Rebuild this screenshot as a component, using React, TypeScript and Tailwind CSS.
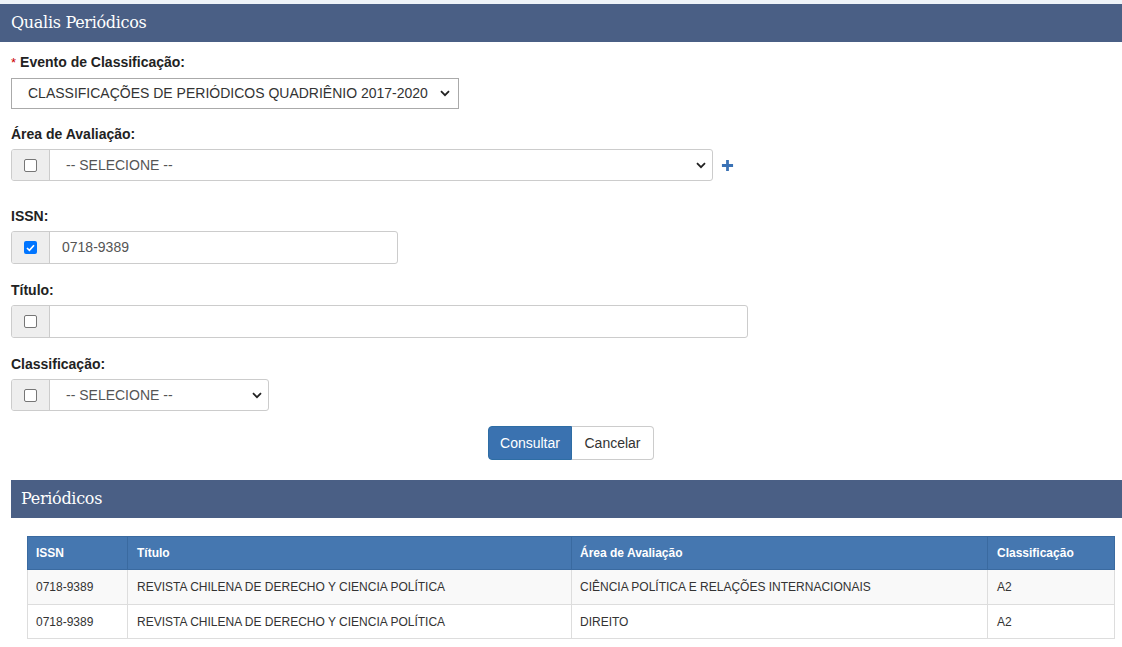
import React from 'react';

const font = { fontFamily: '"Liberation Sans", Arial, sans-serif' };
const slab = { fontFamily: '"DejaVu Serif", "Liberation Serif", serif', letterSpacing: '-0.3px' };

function Chevron() {
  return (
    <svg width="10" height="7" viewBox="0 0 10 7" className="shrink-0">
      <path d="M1 1.2 L5 5.2 L9 1.2" fill="none" stroke="#222" strokeWidth="1.8" />
    </svg>
  );
}

function Check({ checked }: { checked?: boolean }) {
  return (
    <div className="flex w-[38px] shrink-0 items-center justify-center border-r border-[#ccc] bg-[#eee]">
      {checked ? (
        <span className="flex h-[13px] w-[13px] items-center justify-center rounded-[2px] bg-[#0075ff]">
          <svg width="9" height="8" viewBox="0 0 9 8">
            <path d="M1 4 L3.4 6.3 L8 1.2" fill="none" stroke="#fff" strokeWidth="1.7" />
          </svg>
        </span>
      ) : (
        <span className="h-[13px] w-[13px] rounded-[2px] border border-[#767676] bg-white" />
      )}
    </div>
  );
}

function Label({ children, required }: { children: React.ReactNode; required?: boolean }) {
  return (
    <div className="mb-[7px] text-[14px] leading-[16px] font-bold text-[#222]">
      {required && <span className="mr-[4px] text-[13px] font-normal text-[#c00]">*</span>}
      {children}
    </div>
  );
}

const rows = [
  { issn: '0718-9389', titulo: 'REVISTA CHILENA DE DERECHO Y CIENCIA POLÍTICA', area: 'CIÊNCIA POLÍTICA E RELAÇÕES INTERNACIONAIS', cls: 'A2' },
  { issn: '0718-9389', titulo: 'REVISTA CHILENA DE DERECHO Y CIENCIA POLÍTICA', area: 'DIREITO', cls: 'A2' },
];

export default function App() {
  return (
    <div className="h-[647px] w-[1122px] overflow-hidden bg-white leading-normal" style={font}>
      <div className="h-[4px] bg-[#eef3f8]" />
      {/* Page title */}
      <div className="flex h-[38px] items-center bg-[#4a5f85] px-[11px]">
        <h1 className="text-[16px] text-white" style={slab}>
          Qualis Periódicos
        </h1>
      </div>

      <div className="pl-[11px] pt-[12px]">
        <Label required>Evento de Classificação:</Label>
        <div className="flex h-[31px] w-[448px] items-center justify-between border border-[#aaa] bg-white pl-[16px] pr-[8px] text-[14px] text-[#333]">
          <span>CLASSIFICAÇÕES DE PERIÓDICOS QUADRIÊNIO 2017-2020</span>
          <Chevron />
        </div>

        <div className="mt-[17px]">
          <Label>Área de Avaliação:</Label>
          <div className="flex items-center">
            <div className="flex h-[32px] w-[702px] overflow-hidden rounded-[3px] border border-[#ccc]">
              <Check />
              <div className="flex flex-1 items-center justify-between pl-[16px] pr-[6px] text-[14px] text-[#555]">
                <span>-- SELECIONE --</span>
                <Chevron />
              </div>
            </div>
            <svg width="13" height="13" viewBox="0 0 14 14" className="ml-[8px]">
              <path d="M7 1 V13 M1 7 H13" stroke="#3a72b5" strokeWidth="3" />
            </svg>
          </div>
        </div>

        <div className="mt-[27px]">
          <Label>ISSN:</Label>
          <div className="flex h-[33px] w-[387px] overflow-hidden rounded-[3px] border border-[#ccc]">
            <Check checked />
            <div className="flex flex-1 items-center pl-[12px] text-[14px] text-[#555]">0718-9389</div>
          </div>
        </div>

        <div className="mt-[18px]">
          <Label>Título:</Label>
          <div className="flex h-[33px] w-[737px] overflow-hidden rounded-[3px] border border-[#ccc]">
            <Check />
            <div className="flex-1" />
          </div>
        </div>

        <div className="mt-[18px]">
          <Label>Classificação:</Label>
          <div className="flex h-[32px] w-[258px] overflow-hidden rounded-[3px] border border-[#ccc]">
            <Check />
            <div className="flex flex-1 items-center justify-between pl-[16px] pr-[6px] text-[14px] text-[#555]">
              <span>-- SELECIONE --</span>
              <Chevron />
            </div>
          </div>
        </div>

        <div className="mt-[15px] flex pl-[477px]">
          <div className="flex h-[34px] text-[14px]">
            <button className="w-[84px] rounded-l-[4px] border border-[#2e6da4] bg-[#3a72b0] text-white">Consultar</button>
            <button className="w-[82px] rounded-r-[4px] border border-l-0 border-[#ccc] bg-white text-[#333]">Cancelar</button>
          </div>
        </div>

        {/* Results */}
        <div className="mt-[20px] flex h-[38px] items-center bg-[#4a5f85] px-[10px]">
          <h2 className="text-[16px] text-white" style={slab}>
            Periódicos
          </h2>
        </div>

        <div className="pl-[16px] pr-[7px] pt-[18px]">
          <table className="w-full border-collapse text-[12px]">
            <thead>
              <tr className="h-[33px] bg-[#4577b0] text-left text-white">
                <th className="w-[100px] border border-[#3a6aa0] px-[8px] font-bold">ISSN</th>
                <th className="w-[444px] border border-[#3a6aa0] px-[9px] font-bold">Título</th>
                <th className="w-[416px] border border-[#3a6aa0] px-[8px] font-bold">Área de Avaliação</th>
                <th className="border border-[#3a6aa0] px-[9px] font-bold">Classificação</th>
              </tr>
            </thead>
            <tbody className="text-[#333]">
              {rows.map((r, i) => (
                <tr key={i} className={i % 2 === 0 ? 'h-[35px] bg-[#f9f9f9]' : 'h-[34px] bg-white'}>
                  <td className="border border-[#ddd] px-[8px]">{r.issn}</td>
                  <td className="border border-[#ddd] px-[9px]">{r.titulo}</td>
                  <td className="border border-[#ddd] px-[8px]">{r.area}</td>
                  <td className="border border-[#ddd] px-[9px]">{r.cls}</td>
                </tr>
              ))}
            </tbody>
          </table>
        </div>
      </div>
    </div>
  );
}
